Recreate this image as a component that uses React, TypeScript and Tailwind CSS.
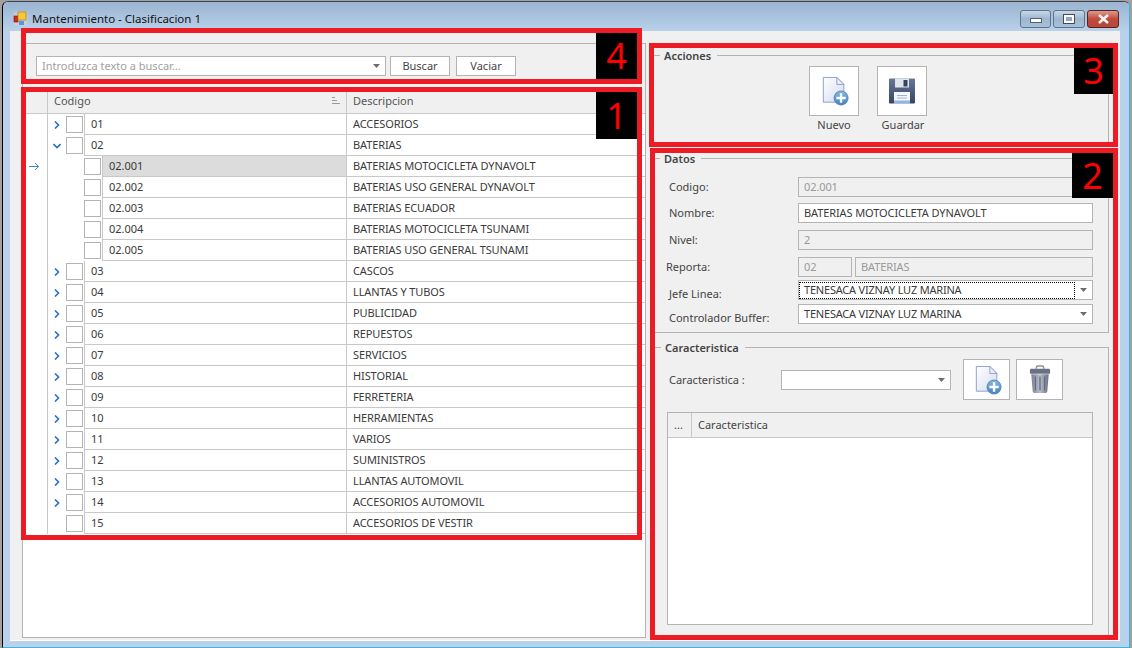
import React from "react";

type Item = { code: string; name: string; level?: number; open?: boolean; leaf?: boolean; selected?: boolean };

const items: Item[] = [
  { code: "01", name: "ACCESORIOS" },
  { code: "02", name: "BATERIAS", open: true },
  { code: "02.001", name: "BATERIAS MOTOCICLETA DYNAVOLT", level: 1, selected: true },
  { code: "02.002", name: "BATERIAS USO GENERAL DYNAVOLT", level: 1 },
  { code: "02.003", name: "BATERIAS ECUADOR", level: 1 },
  { code: "02.004", name: "BATERIAS MOTOCICLETA TSUNAMI", level: 1 },
  { code: "02.005", name: "BATERIAS USO GENERAL TSUNAMI", level: 1 },
  { code: "03", name: "CASCOS" },
  { code: "04", name: "LLANTAS Y TUBOS" },
  { code: "05", name: "PUBLICIDAD" },
  { code: "06", name: "REPUESTOS" },
  { code: "07", name: "SERVICIOS" },
  { code: "08", name: "HISTORIAL" },
  { code: "09", name: "FERRETERIA" },
  { code: "10", name: "HERRAMIENTAS" },
  { code: "11", name: "VARIOS" },
  { code: "12", name: "SUMINISTROS" },
  { code: "13", name: "LLANTAS AUTOMOVIL" },
  { code: "14", name: "ACCESORIOS AUTOMOVIL" },
  { code: "15", name: "ACCESORIOS DE VESTIR", leaf: true },
];

function Caret() {
  return (
    <svg width="7" height="4" viewBox="0 0 7 4" className="shrink-0">
      <path d="M0 0h7L3.5 4z" fill="#6d6d6d" />
    </svg>
  );
}

function NewDocIcon() {
  return (
    <svg width="28" height="30" viewBox="0 0 30 32">
      <defs>
        <linearGradient id="docFill" x1="0" y1="0" x2="1" y2="1">
          <stop offset="0" stopColor="#ffffff" />
          <stop offset="1" stopColor="#d5dcf0" />
        </linearGradient>
        <linearGradient id="plusFill" x1="0" y1="0" x2="0" y2="1">
          <stop offset="0" stopColor="#8ab8e2" />
          <stop offset="1" stopColor="#3f82c4" />
        </linearGradient>
      </defs>
      <path d="M2.5 1.5H17L24.5 9V28H2.5z" fill="url(#docFill)" stroke="#8c9bc8" strokeWidth="1" />
      <path d="M17 1.5V9H24.5z" fill="#eef1f9" stroke="#8c9bc8" strokeWidth="1" />
      <circle cx="21.5" cy="23.5" r="7.5" fill="url(#plusFill)" stroke="#4f83b5" strokeWidth="1" />
      <path d="M21.5 18.5v10M16.5 23.5h10" stroke="#ffffff" strokeWidth="2.6" />
    </svg>
  );
}

function SaveIcon() {
  return (
    <svg width="26" height="26" viewBox="0 0 26 26">
      <defs>
        <linearGradient id="diskFill" x1="0" y1="0" x2="0" y2="1">
          <stop offset="0" stopColor="#67779a" />
          <stop offset="1" stopColor="#38445f" />
        </linearGradient>
      </defs>
      <path d="M0 1.5A1 1 0 0 1 1 .5H25A1 1 0 0 1 26 1.5V24.5A1 1 0 0 1 25 25.5H1A1 1 0 0 1 0 24.5z" fill="url(#diskFill)" />
      <rect x="6" y="0.5" width="14" height="9" fill="#dfe3ea" />
      <rect x="14.5" y="2" width="4" height="6.5" fill="#38445f" />
      <rect x="5" y="14" width="16" height="11.5" fill="#f4f6fb" />
      <path d="M8 17.5h10M8 20h10" stroke="#9fb3d6" strokeWidth="1" />
      <rect x="5" y="22.5" width="16" height="3" fill="#8fb7e4" />
    </svg>
  );
}

function TrashIcon() {
  return (
    <svg width="22" height="29" viewBox="0 0 24 30" preserveAspectRatio="none">
      <defs>
        <linearGradient id="binFill" x1="0" y1="0" x2="1" y2="0">
          <stop offset="0" stopColor="#7b8094" />
          <stop offset="0.5" stopColor="#b9bdc9" />
          <stop offset="1" stopColor="#6a6f84" />
        </linearGradient>
      </defs>
      <path d="M8 4V2.5A1.5 1.5 0 0 1 9.5 1h5A1.5 1.5 0 0 1 16 2.5V4" fill="none" stroke="#8a8f9f" strokeWidth="1.5" />
      <path d="M1 5.500A1.500 1.500 0 0 1 2.500 4h19A1.500 1.500 0 0 1 23 5.500V9H1z" fill="#6a7184" />
      <path d="M2.500 9.500h19L20 27a2 2 0 0 1-2 2H6a2 2 0 0 1-2-2z" fill="url(#binFill)" />
      <path d="M7 12v14M12 12v14M17 12v14" stroke="#646a7f" strokeWidth="1.4" />
    </svg>
  );
}

function Field({ value, disabled, className }: { value: string; disabled?: boolean; className?: string }) {
  return (
    <div
      className={`h-[20px] flex items-center border border-[#b4b4b4] pl-[5px] tracking-[-0.1px] ${
        disabled ? "bg-[#f0f0f0] text-[#999999]" : "bg-white text-[#3a3a3a]"
      } ${className ?? ""}`}
    >
      {value}
    </div>
  );
}

function Combo({ value, focused, className }: { value?: string; focused?: boolean; className?: string }) {
  return (
    <div className={`h-[20px] flex items-center bg-white border border-[#b4b4b4] text-[#3a3a3a] tracking-[-0.2px] ${className ?? ""}`}>
      <div className={focused ? "flex-1 h-[17px] flex items-center pl-[4px] border border-dotted border-black" : "flex-1 h-[18px] flex items-center pl-[5px]"}>
        {value}
      </div>
      <div className="w-[17px] flex justify-center">
        <Caret />
      </div>
    </div>
  );
}

function Group({ title, legendClass, className, children }: { title: string; legendClass?: string; className?: string; children: React.ReactNode }) {
  return (
    <div className={`w-[459px] border border-[#b4b4b4] flex flex-col ${className ?? ""}`}>
      <div className={`-mt-[9px] h-[18px] w-fit bg-[#f0f0f0] pl-[4px] pr-[6px] font-semibold text-[#444444] flex items-center ${legendClass ?? "ml-[9px]"}`}>
        {title}
      </div>
      {children}
    </div>
  );
}

function Row({ item }: { item: Item }) {
  const level = item.level ?? 0;
  return (
    <div className="h-[21px] flex text-[#3a3a3a]">
      <div className="w-[25px] shrink-0 border-r border-[#c8c8c8] flex items-center justify-center pr-[1px]">
        {item.selected && (
          <svg width="11" height="9" viewBox="0 0 11 9">
            <path d="M0 4.5h9.5M6 1l3.7 3.5L6 8" fill="none" stroke="#3b7fdc" strokeWidth="1" />
          </svg>
        )}
      </div>
      <div className="w-[18px] shrink-0 flex items-center justify-center">
        {level === 0 && !item.leaf && !item.open && (
          <svg width="6" height="8" viewBox="0 0 6 8">
            <path d="M1 .5L4.500 4L1 7.500" fill="none" stroke="#2b6fc9" strokeWidth="1.6" />
          </svg>
        )}
        {item.open && (
          <svg width="8" height="6" viewBox="0 0 8 6">
            <path d="M.5 1L4 4.500L7.500 1" fill="none" stroke="#2b6fc9" strokeWidth="1.6" />
          </svg>
        )}
      </div>
      {level === 1 && <div className="w-[18px] shrink-0" />}
      <div className="w-[17px] shrink-0 flex items-center">
        <div className="w-[17px] h-[17px] border border-[#b4b4b4] bg-white" />
      </div>
      <div className="w-[1px] shrink-0" />
      <div
        className={`${level === 1 ? "w-[245px]" : "w-[263px]"} shrink-0 border-l border-r border-b border-[#c8c8c8] pl-[6px] flex items-center ${
          item.selected ? "bg-[#dcdcdc]" : ""
        }`}
      >
        {item.code}
      </div>
      <div className="flex-1 border-b border-[#c8c8c8] pl-[6px] flex items-center tracking-[-0.1px]">{item.name}</div>
    </div>
  );
}

function Marker({ className, label, boxClass }: { className: string; label: string; boxClass: string }) {
  return (
    <div className={`absolute border-[5px] border-[#ed1c24] ${className}`}>
      <div className={`absolute bg-black text-[#ff0000] flex items-center justify-center text-[36px] leading-none ${boxClass}`}>{label}</div>
    </div>
  );
}

export default function App() {
  return (
    <div
      className="relative w-[1132px] h-[648px] overflow-hidden bg-[#a0a0a0] px-[2px] pt-[1px] text-[11px] leading-[16px]"
      style={{ fontFamily: '"Noto Sans", "Open Sans", sans-serif' }}
    >
      <div className="h-full flex flex-col rounded-t-[6px] border-t border-l border-r border-b border-t-[#3c4650] border-l-black border-r-[#35b8dc] border-b-[#35b8dc] bg-[#b9d1ea]">
        {/* --- Barra de titulo --- */}
        <div className="h-[29px] shrink-0 rounded-t-[6px] bg-gradient-to-b from-[#9ab4d1] to-[#b9d1ea] pl-[10px] pr-[10px] flex items-start">
          <svg width="15" height="15" viewBox="0 0 15 15" className="mt-[9px]">
            <rect x="0.500" y="0.500" width="14" height="14" fill="#d6d6d6" opacity="0.5" />
            <rect x="1" y="5" width="4" height="6" fill="#d5261e" stroke="#7a1712" strokeWidth="0.600" />
            <rect x="5" y="1" width="8" height="8" fill="#f5c73c" stroke="#b58a18" strokeWidth="0.800" />
            <rect x="6" y="10" width="5" height="4" fill="#5b93df" />
          </svg>
          <span className="ml-[4px] mt-[8px] text-[11.5px] text-[#111111] leading-[18px]">Mantenimiento - Clasificacion 1</span>
          <div className="ml-auto mt-[8px] flex gap-[2px]">
            <div className="w-[31px] h-[18px] rounded-[3px] border border-[#5c7389] bg-gradient-to-b from-[#c8d8e8] via-[#9db6cf] to-[#a9c2d9] flex items-center justify-center pt-[3px]">
              <div className="w-[12px] h-[5px] bg-white border border-[#53606e]" />
            </div>
            <div className="w-[32px] h-[18px] rounded-[3px] border border-[#5c7389] bg-gradient-to-b from-[#c8d8e8] via-[#9db6cf] to-[#a9c2d9] flex items-center justify-center">
              <div className="w-[12px] h-[10px] border border-[#3f4c5a] bg-white p-[2px]">
                <div className="w-full h-full bg-[#8fa7bf]" />
              </div>
            </div>
            <div className="w-[32px] h-[18px] rounded-[3px] border border-[#5b2020] bg-gradient-to-b from-[#dc9a8c] via-[#c0493a] to-[#b7473a] flex items-center justify-center">
              <svg width="13" height="10" viewBox="0 0 13 10">
                <path d="M2 1l9 8M11 1l-9 8" stroke="#f4f4f4" strokeWidth="2.600" />
              </svg>
            </div>
          </div>
        </div>

        {/* --- Area de trabajo --- */}
        <div className="ml-[7px] mr-[9px] h-[610px] shrink-0 bg-[#f0f0f0] border-b border-white flex">
          {/* --- Panel izquierdo: busqueda y arbol --- */}
          <div className="ml-[12px] mt-[12px] w-[624px] h-[595px] shrink-0 border border-[#b4b4b4] flex flex-col bg-white">
            <div className="h-[48px] shrink-0 bg-[#f0f0f0] pl-[13px] pt-[12px] flex items-start">
              <div className="w-[350px] h-[20px] bg-white border border-[#b4b4b4] flex items-center pl-[5px] text-[#a0a0a0]">
                <span className="flex-1">Introduzca texto a buscar...</span>
                <div className="w-[17px] flex justify-center">
                  <Caret />
                </div>
              </div>
              <div className="ml-[4px] w-[60px] h-[20px] bg-white border border-[#b4b4b4] flex items-center justify-center text-[#444444]">Buscar</div>
              <div className="ml-[6px] w-[60px] h-[20px] bg-white border border-[#b4b4b4] flex items-center justify-center text-[#444444]">Vaciar</div>
            </div>

            <div className="h-[22px] shrink-0 flex bg-[#f0f0f0] border-b border-[#c8c8c8] text-[#555555]">
              <div className="w-[25px] border-r border-[#c8c8c8]" />
              <div className="w-[299px] border-r border-[#c8c8c8] pl-[6px] pr-[6px] pb-[4px] flex items-center justify-between">
                <span>Codigo</span>
                <svg width="8" height="7" viewBox="0 0 8 7">
                  <path d="M0 .5h3M0 3.500h5M0 6.500h8" stroke="#9a9a9a" strokeWidth="1" />
                </svg>
              </div>
              <div className="flex-1 pl-[6px] pb-[4px] flex items-center">Descripcion</div>
            </div>
            {items.map((item) => (
              <Row key={item.code} item={item} />
            ))}
          </div>

          {/* --- Panel derecho --- */}
          <div className="ml-[4px] mt-[24px] flex flex-col">
            <Group title="Acciones" className="h-[91px] shrink-0">
              <div className="ml-[158px] mt-[1px] flex gap-[18px]">
                <div className="w-[50px] flex flex-col items-center">
                  <div className="w-[50px] h-[50px] bg-white border border-[#b4b4b4] flex items-center justify-center pl-[2px]">
                    <NewDocIcon />
                  </div>
                  <span className="mt-[1px] text-[#444444]">Nuevo</span>
                </div>
                <div className="w-[50px] flex flex-col items-center">
                  <div className="w-[50px] h-[50px] bg-white border border-[#b4b4b4] flex items-center justify-center">
                    <SaveIcon />
                  </div>
                  <span className="mt-[1px] ml-[2px] text-[#444444] whitespace-nowrap">Guardar</span>
                </div>
              </div>
            </Group>

            <Group title="Datos" className="mt-[12px] h-[175px] shrink-0">
              <div className="mt-[9px] flex items-center pl-[18px]">
                <span className="w-[129px] text-[#444444]">Codigo:</span>
                <Field value="02.001" disabled className="w-[295px]" />
              </div>
              <div className="mt-[6px] flex items-center pl-[18px]">
                <span className="w-[129px] text-[#444444]">Nombre:</span>
                <Field value="BATERIAS MOTOCICLETA DYNAVOLT" className="w-[295px]" />
              </div>
              <div className="mt-[7px] flex items-center pl-[18px]">
                <span className="w-[129px] text-[#444444]">Nivel:</span>
                <Field value="2" disabled className="w-[295px]" />
              </div>
              <div className="mt-[7px] flex items-center pl-[15px]">
                <span className="w-[132px] text-[#444444]">Reporta:</span>
                <Field value="02" disabled className="w-[54px]" />
                <Field value="BATERIAS" disabled className="ml-[3px] w-[238px]" />
              </div>
              <div className="mt-[3px] flex items-center pl-[18px]">
                <span className="w-[129px] translate-y-[4px] text-[#444444]">Jefe Linea:</span>
                <Combo value="TENESACA VIZNAY LUZ MARINA" focused className="w-[295px]" />
              </div>
              <div className="mt-[4px] flex items-center pl-[18px]">
                <span className="w-[129px] translate-y-[4px] text-[#444444] whitespace-nowrap">Controlador Buffer:</span>
                <Combo value="TENESACA VIZNAY LUZ MARINA" className="w-[295px]" />
              </div>
            </Group>

            <Group title="Caracteristica" legendClass="ml-[10px]" className="mt-[14px] h-[290px] shrink-0">
              <div className="mt-[2px] flex items-center pl-[18px]">
                <span className="w-[112px] text-[#444444]">Caracteristica :</span>
                <Combo className="w-[170px]" />
                <div className="ml-[12px] w-[47px] h-[41px] bg-white border border-[#b4b4b4] flex items-center justify-center pl-[2px]">
                  <NewDocIcon />
                </div>
                <div className="ml-[6px] w-[47px] h-[41px] bg-white border border-[#b4b4b4] flex items-center justify-center">
                  <TrashIcon />
                </div>
              </div>
              <div className="mt-[12px] ml-[16px] w-[426px] h-[213px] border border-[#b4b4b4] bg-white flex flex-col">
                <div className="h-[25px] shrink-0 bg-[#f0f0f0] border-b border-[#c8c8c8] flex text-[#444444]">
                  <div className="w-[24px] border-r border-[#c8c8c8] flex items-center justify-center pr-[2px]">...</div>
                  <div className="flex-1 pl-[6px] flex items-center">Caracteristica</div>
                </div>
              </div>
            </Group>
          </div>
        </div>
      </div>

      {/* --- Marcas rojas sobre la captura --- */}
      <Marker className="left-[21px] top-[28px] w-[621px] h-[56px]" label="4" boxClass="right-0 top-0 w-[41px] h-[46px]" />
      <Marker className="left-[21px] top-[87px] w-[621px] h-[453px]" label="1" boxClass="right-0 top-0 w-[41px] h-[47px]" />
      <Marker className="left-[649px] top-[43px] w-[469px] h-[104px]" label="3" boxClass="right-0 top-0 w-[39px] h-[46px]" />
      <Marker className="left-[650px] top-[148px] w-[468px] h-[492px]" label="2" boxClass="right-0 top-0 w-[41px] h-[45px]" />
    </div>
  );
}
